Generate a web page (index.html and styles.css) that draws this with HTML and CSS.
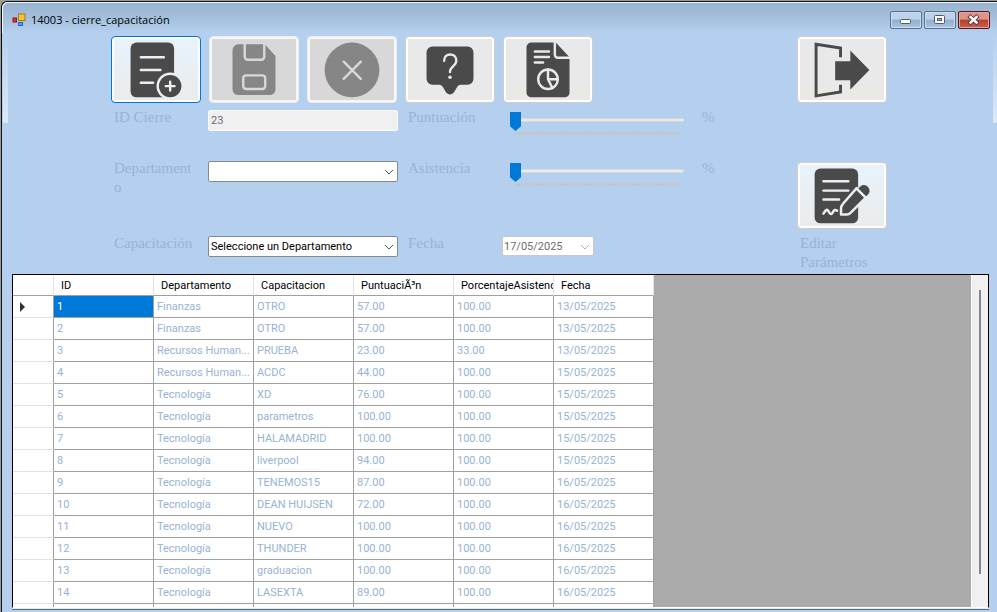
FILE: index.html
```html
<!DOCTYPE html>
<html lang="es">
<head>
<meta charset="utf-8">
<title>14003 - cierre_capacitación</title>
<link rel="stylesheet" href="styles.css">
</head>
<body>
<div class="window">
  <header class="titlebar">
    <svg class="app-icon" viewBox="0 0 14 14" aria-hidden="true">
      <rect x="6.5" y="1" width="6.5" height="6.5" fill="#f7c62f" stroke="#a8780c"/>
      <rect x="1" y="5" width="3.5" height="4" fill="#d33" stroke="#8c1616"/>
      <rect x="6.5" y="9.5" width="4" height="3" fill="#5b97ec" stroke="#2d62c4"/>
    </svg>
    <h1 class="title">14003 - cierre_capacitación</h1>
    <div class="controls">
      <button class="control" type="button" aria-label="Minimizar"><svg viewBox="0 0 32 18"><rect x="10.5" y="8.5" width="10" height="4" rx="1" fill="#fff" stroke="#4d5a70"/></svg></button>
      <button class="control" type="button" aria-label="Maximizar"><svg viewBox="0 0 32 18"><rect x="10.5" y="4.5" width="10" height="8" rx="1" fill="#fff" stroke="#4d5a70"/><rect x="13.5" y="7.5" width="4" height="2" fill="#9db9d6" stroke="#4d5a70"/></svg></button>
      <button class="control control-close" type="button" aria-label="Cerrar"><svg viewBox="0 0 32 18"><path d="M12.500 6l6 5.500M18.500 6l-6 5.500" stroke="#5a3a48" stroke-width="4.400" stroke-linecap="square"/><path d="M12.500 6l6 5.500M18.500 6l-6 5.500" stroke="#fff" stroke-width="2.400" stroke-linecap="square"/></svg></button>
    </div>
  </header>

  <main class="content">
    <form class="form">
      <button class="tool tool-focus c1" type="button" aria-label="Nuevo">
        <svg viewBox="0 0 90 67"><rect class="ink" x="19" y="6" width="44.5" height="56" rx="6"/><path class="cut" d="M29.500 21h23.500M29.500 34h20M29.500 47h12.500"/><circle class="paper" cx="59.5" cy="50.5" r="14"/><circle class="ink" cx="59.5" cy="50.5" r="11.5"/><path class="cut" d="M55 50.500h9M59.500 46v9"/></svg>
      </button>
      <button class="tool c2" type="button" disabled aria-label="Guardar">
        <svg viewBox="0 0 90 67"><path class="ink" d="M29 7.700h27l11 12v34a6 6 0 0 1-6 6h-32a6 6 0 0 1-6-6v-40a6 6 0 0 1 6-6z"/><path class="cut" d="M35.500 7v13.500a3 3 0 0 0 3 3h14a3 3 0 0 0 3-3V7"/><rect class="cut" x="34" y="39.5" width="22.5" height="14" rx="3"/></svg>
      </button>
      <button class="tool c3" type="button" disabled aria-label="Cancelar">
        <svg viewBox="0 0 90 67"><circle class="ink" cx="45" cy="34" r="28"/><path class="cut" d="M36.500 25.500l17.500 17.500M54 25.500L36.500 43"/></svg>
      </button>
      <button class="tool c4" type="button" aria-label="Ayuda">
        <svg viewBox="0 0 90 67"><path class="ink" d="M27 10h36a6 6 0 0 1 6 6v27a6 6 0 0 1-6 6h-7c-2 0-3 1-4 3l-3 5q-4 4-8 0l-3-5c-1-2-2-3-4-3h-7a6 6 0 0 1-6-6v-27a6 6 0 0 1 6-6z"/><path class="cut" d="M39 24.500c0-8.500 12.500-8.500 12.500 0 0 5.500-6.500 5.500-6.500 11.500"/><circle class="paper" cx="45" cy="41.5" r="1.8"/></svg>
      </button>
      <button class="tool tool-lined c5" type="button" aria-label="Reporte">
        <svg viewBox="0 0 90 67"><path class="ink" d="M28 6h25l14 15v36a5 5 0 0 1-5 5H28a5 5 0 0 1-5-5V11a5 5 0 0 1 5-5z"/><path class="cut" d="M52 5v13.500a3 3 0 0 0 3 3h13M31.500 15H46M31.500 20.700H46M31.500 26.300H40"/><circle class="cut" cx="45" cy="43.5" r="10"/><path class="cut" d="M45 33.500v10h10M45 43.500l4.500 9"/></svg>
      </button>
      <button class="tool tool-lined c8" type="button" aria-label="Salir">
        <svg viewBox="0 0 90 67"><path d="M43.500 21V11.500L18.500 7.700V60.500L43.500 56.500V49" fill="none" stroke="#4a4a4a" stroke-width="3"/><path class="ink" d="M38 25h15.500V14L73 34 53.500 54V44.500H38z"/></svg>
      </button>

      <label class="caption r2 c1" for="closing-id">ID Cierre</label>
      <input class="text-field r2" id="closing-id" type="text" value="23" disabled>
      <label class="caption r2 c4" for="score">Puntuación</label>
      <div class="slider r2"><input id="score" type="range" min="0" max="100" value="0"><div class="ticks"></div></div>
      <span class="caption r2 c7">%</span>

      <label class="caption r3 c1" for="department">Departamento</label>
      <div class="combo r3">
        <select id="department"><option></option><option>Finanzas</option></select>
        <svg class="chevron" viewBox="0 0 10 6"><path d="M1 1l4 4 4-4"/></svg>
      </div>
      <label class="caption r3 c4" for="attendance">Asistencia</label>
      <div class="slider r3"><input id="attendance" type="range" min="0" max="100" value="0"><div class="ticks"></div></div>
      <span class="caption r3 c7">%</span>
      <button class="tool tool-glow tool-edit r3 c8" id="edit" type="button">
        <svg viewBox="0 0 90 67"><rect class="ink" x="17" y="6" width="44.5" height="56" rx="6"/><path class="cut" d="M26 19h25.500M26 28.500h25.500M26 37.500h16M26 52c4-6 4-4 6-1s3 1 4-1 2-2 4-1"/><path class="ink outlined" d="M60 26l9.500 9.500L53.500 51.500c-1 1-2 1.500-3.500 1.500h-6v-6c0-2 .5-3.500 2-5z"/><path class="ink" d="M61.500 26.500l2.500-2.500c5-4 12 3 8 8l-2.500 2.500z"/><path class="cut" d="M60 26.500l9 9"/></svg>
      </button>

      <label class="caption r4 c1" for="training">Capacitación</label>
      <div class="combo r4">
        <select id="training"><option>Seleccione un Departamento</option></select>
        <svg class="chevron" viewBox="0 0 10 6"><path d="M1 1l4 4 4-4"/></svg>
      </div>
      <label class="caption r4 c4" for="date">Fecha</label>
      <div class="date r4">
        <input id="date" type="text" value="17/05/2025" disabled>
        <svg class="chevron" viewBox="0 0 10 6"><path d="M1 1l4 4 4-4"/></svg>
      </div>
      <label class="caption r4 c8" for="edit">Editar Parámetros</label>
    </form>

    <section class="grid-panel">
      <div class="grid-view">
        <table class="records">
          <colgroup><col class="col-head"><col><col><col><col><col><col></colgroup>
          <thead><tr><td></td><th>ID</th><th>Departamento</th><th>Capacitacion</th><th>PuntuaciÃ³n</th><th>PorcentajeAsistencia</th><th>Fecha</th></tr></thead>
          <tbody>
            <tr><th><span class="marker"></span></th><td class="selected">1</td><td>Finanzas</td><td>OTRO</td><td>57.00</td><td>100.00</td><td>13/05/2025</td></tr>
            <tr><th></th><td>2</td><td>Finanzas</td><td>OTRO</td><td>57.00</td><td>100.00</td><td>13/05/2025</td></tr>
            <tr><th></th><td>3</td><td>Recursos Human...</td><td>PRUEBA</td><td>23.00</td><td>33.00</td><td>13/05/2025</td></tr>
            <tr><th></th><td>4</td><td>Recursos Human...</td><td>ACDC</td><td>44.00</td><td>100.00</td><td>15/05/2025</td></tr>
            <tr><th></th><td>5</td><td>Tecnología</td><td>XD</td><td>76.00</td><td>100.00</td><td>15/05/2025</td></tr>
            <tr><th></th><td>6</td><td>Tecnología</td><td>parametros</td><td>100.00</td><td>100.00</td><td>15/05/2025</td></tr>
            <tr><th></th><td>7</td><td>Tecnología</td><td>HALAMADRID</td><td>100.00</td><td>100.00</td><td>15/05/2025</td></tr>
            <tr><th></th><td>8</td><td>Tecnología</td><td>liverpool</td><td>94.00</td><td>100.00</td><td>15/05/2025</td></tr>
            <tr><th></th><td>9</td><td>Tecnología</td><td>TENEMOS15</td><td>87.00</td><td>100.00</td><td>16/05/2025</td></tr>
            <tr><th></th><td>10</td><td>Tecnología</td><td>DEAN HUIJSEN</td><td>72.00</td><td>100.00</td><td>16/05/2025</td></tr>
            <tr><th></th><td>11</td><td>Tecnología</td><td>NUEVO</td><td>100.00</td><td>100.00</td><td>16/05/2025</td></tr>
            <tr><th></th><td>12</td><td>Tecnología</td><td>THUNDER</td><td>100.00</td><td>100.00</td><td>16/05/2025</td></tr>
            <tr><th></th><td>13</td><td>Tecnología</td><td>graduacion</td><td>100.00</td><td>100.00</td><td>16/05/2025</td></tr>
            <tr><th></th><td>14</td><td>Tecnología</td><td>LASEXTA</td><td>89.00</td><td>100.00</td><td>16/05/2025</td></tr>
            <tr><th></th><td></td><td></td><td></td><td></td><td></td><td></td></tr>
          </tbody>
        </table>
      </div>
      <div class="scrollbar"><div class="scroll-thumb"></div></div>
    </section>
  </main>
</div>
</body>
</html>
```
FILE: styles.css
```css
* { box-sizing: border-box; }

body {
  margin: 0;
  background: #9a9c9b;
  font-family: Roboto, "Liberation Sans", Arial, sans-serif;
  font-size: 11px;
}

.window {
  display: flex;
  flex-direction: column;
  height: 100vh;
  padding: 1px 0 0 1px;
  overflow: hidden;
}

.titlebar {
  display: flex;
  align-items: center;
  flex: none;
  height: 32px;
  padding: 5px 7px 0 9px;
  border-top: 1px solid #111;
  border-left: 1px solid #111;
  border-radius: 6px 0 0 0;
  box-shadow: inset 1px 1px 0 #f4f9ff;
  background: linear-gradient(#98b3d0, #a4bfdc 50%, #b4d0ee);
}

.app-icon { width: 14px; height: 14px; margin: 0 5px 0 1px; }

.title {
  flex: 1;
  margin: 0;
  font: 11px/16px "Open Sans", "Noto Sans", sans-serif;
  color: #000;
}

.controls { display: flex; gap: 2px; }

.control {
  width: 32px;
  height: 18px;
  padding: 0;
  border: 1px solid #5b708c;
  border-radius: 2px;
  box-shadow: inset 0 0 0 1px #c9dcf0;
  background: linear-gradient(#bdd2e8 45%, #91afcf 50%, #a9c5e2);
}

.control svg { display: block; width: 32px; height: 18px; margin: -1px; fill: none; }

.control-close {
  border-color: #5a1220;
  box-shadow: inset 0 0 0 1px #e3a69c;
  background: linear-gradient(#dd9488 45%, #b8412c 50%, #c9604a);
}

.content {
  display: flex;
  flex-direction: column;
  flex: 1;
  min-height: 0;
  padding: 0 8px 4px 10px;
  border-left: 1px solid #111;
  background:
    linear-gradient(#b4d0ee, #dce9f8) 1px 0 / 5px 90px no-repeat,
    linear-gradient(#b4d0ee, #dce9f8) 100% 0 / 4px 90px no-repeat,
    #b4d0ee;
}

.form {
  display: grid;
  grid-template-columns: repeat(10, 1fr);
  grid-template-rows: 73px 51px 75px 42px;
  flex: none;
  margin: 0 -1px 0 -2px;
}

.r2 { grid-row: 2; }
.r3 { grid-row: 3; }
.r4 { grid-row: 4; }
.c1 { grid-column: 2; }
.c2 { grid-column: 3; }
.c3 { grid-column: 4; }
.c4 { grid-column: 5; }
.c5 { grid-column: 6; }
.c7 { grid-column: 8; }
.c8 { grid-column: 9; }

.tool {
  --paper: #e9e9e9;
  height: 67px;
  margin: 3px 5px 0 3px;
  padding: 0;
  border: 1px solid #d0cdca;
  border-radius: 4px;
  box-shadow: inset 0 0 0 2px #fff;
  background: var(--paper);
}

.tool:disabled { --paper: #d8d8d8; border-color: #ededed; box-shadow: inset 0 0 0 2px #f7f7f7; }
.tool-focus, .tool-glow { --paper: #ebeff3; background: linear-gradient(#e7f3fd, #ebebeb); }
.tool-focus { border-color: #0078d7; }
.tool-lined { background: linear-gradient(#f3e9c4, #f3e9c4) 0 55px / 100% 1px no-repeat, var(--paper); }
.tool-edit { margin-top: 5px; }
.tool svg { display: block; width: 100%; height: 67px; margin: -1px 0; }

.ink { fill: #4a4a4a; }
.paper { fill: var(--paper); }
.cut { fill: none; stroke: var(--paper); stroke-width: 2.5; stroke-linecap: round; stroke-linejoin: round; }
.outlined { stroke: var(--paper); stroke-width: 2.5; stroke-linejoin: round; }
.tool:disabled .ink { fill: #868686; }

.caption {
  padding: 2px 8px 0 6px;
  font: 15px/19px "Liberation Serif", "Times New Roman", serif;
  color: #97b3d4;
  overflow-wrap: anywhere;
}

.text-field,
.combo {
  grid-column: 3 / span 2;
  height: 21px;
  margin: 4px 4px 0 2px;
}

.text-field {
  padding: 0 2px;
  border: 1px solid #fbfbfb;
  border-radius: 2px;
  background: #f0f0f0;
  font: inherit;
  color: #6d6d6d;
}

.combo, .date { position: relative; }

.combo select,
.date input {
  width: 100%;
  height: 100%;
  padding: 0 2px;
  border: 1px solid #828a92;
  border-radius: 2px;
  background: #fff;
  font: inherit;
  color: #000;
  appearance: none;
}

.date { grid-column: 6; height: 20px; margin: 4px 4px 0 2px; }
.date input { padding: 0 1px; border-color: #c9c9c9; color: #6d6d6d; }

.chevron {
  position: absolute;
  top: 8px;
  right: 4px;
  width: 10px;
  height: 6px;
  fill: none;
  stroke: #555;
  pointer-events: none;
}

.date .chevron { stroke: #b5b5b5; }

.slider { grid-column: 6 / span 2; margin: 6px 12px 0 10px; }

.slider input {
  display: block;
  width: 100%;
  height: 19px;
  margin: 0;
  background:
    linear-gradient(#e9ebea, #e9ebea) 1px 7px / calc(100% - 2px) 2px no-repeat,
    linear-gradient(#d6d9db, #d6d9db) 0 6px / 100% 4px no-repeat;
  appearance: none;
}

.slider input::-webkit-slider-thumb {
  width: 11px;
  height: 19px;
  background: #0078d7;
  clip-path: polygon(0 0, 100% 0, 100% 75%, 50% 100%, 0 75%);
  appearance: none;
}

.ticks {
  height: 3px;
  margin: 1px 5px 0;
  background: repeating-linear-gradient(90deg, #c6c4c2 0 2px, #b4d0ee 2px 3px);
}

.grid-panel {
  display: flex;
  flex: 1;
  min-height: 0;
  border: 1px solid #000;
  border-bottom: 1px solid #fff;
  box-shadow: 0 1px 0 #e8e8e8, 0 2px 0 #5d6b7a;
  background: #ababab;
}

.grid-view { flex: 1; min-width: 0; overflow: hidden; }

.records {
  width: 641px;
  table-layout: fixed;
  border-collapse: separate;
  border-spacing: 0;
  background: #fff;
  color: #97b3d4;
}

.col-head { width: 41px; }

.records td,
.records th {
  height: 22px;
  padding: 0 3px;
  border-right: 1px solid #a0a0a0;
  border-bottom: 1px solid #a0a0a0;
  font-weight: normal;
  text-align: left;
  white-space: nowrap;
  overflow: hidden;
}

.records thead td,
.records thead th {
  height: 21px;
  padding: 0 0 0 7px;
  border-right-color: #e2e2e2;
  color: #000;
}

.records tbody th { border-bottom-color: #e2e2e2; }
.records .selected { background: #0078d7; color: #fff; }

.marker {
  display: block;
  width: 0;
  margin-left: 4px;
  border: 5px solid transparent;
  border-left: 5px solid #333;
  border-right: 0;
}

.scrollbar {
  width: 17px;
  padding: 15px 7px 33px;
  border-left: 1px solid #fff;
  background: #f0f0f0;
}

.scroll-thumb { width: 2px; height: 100%; background: #868686; }
```
